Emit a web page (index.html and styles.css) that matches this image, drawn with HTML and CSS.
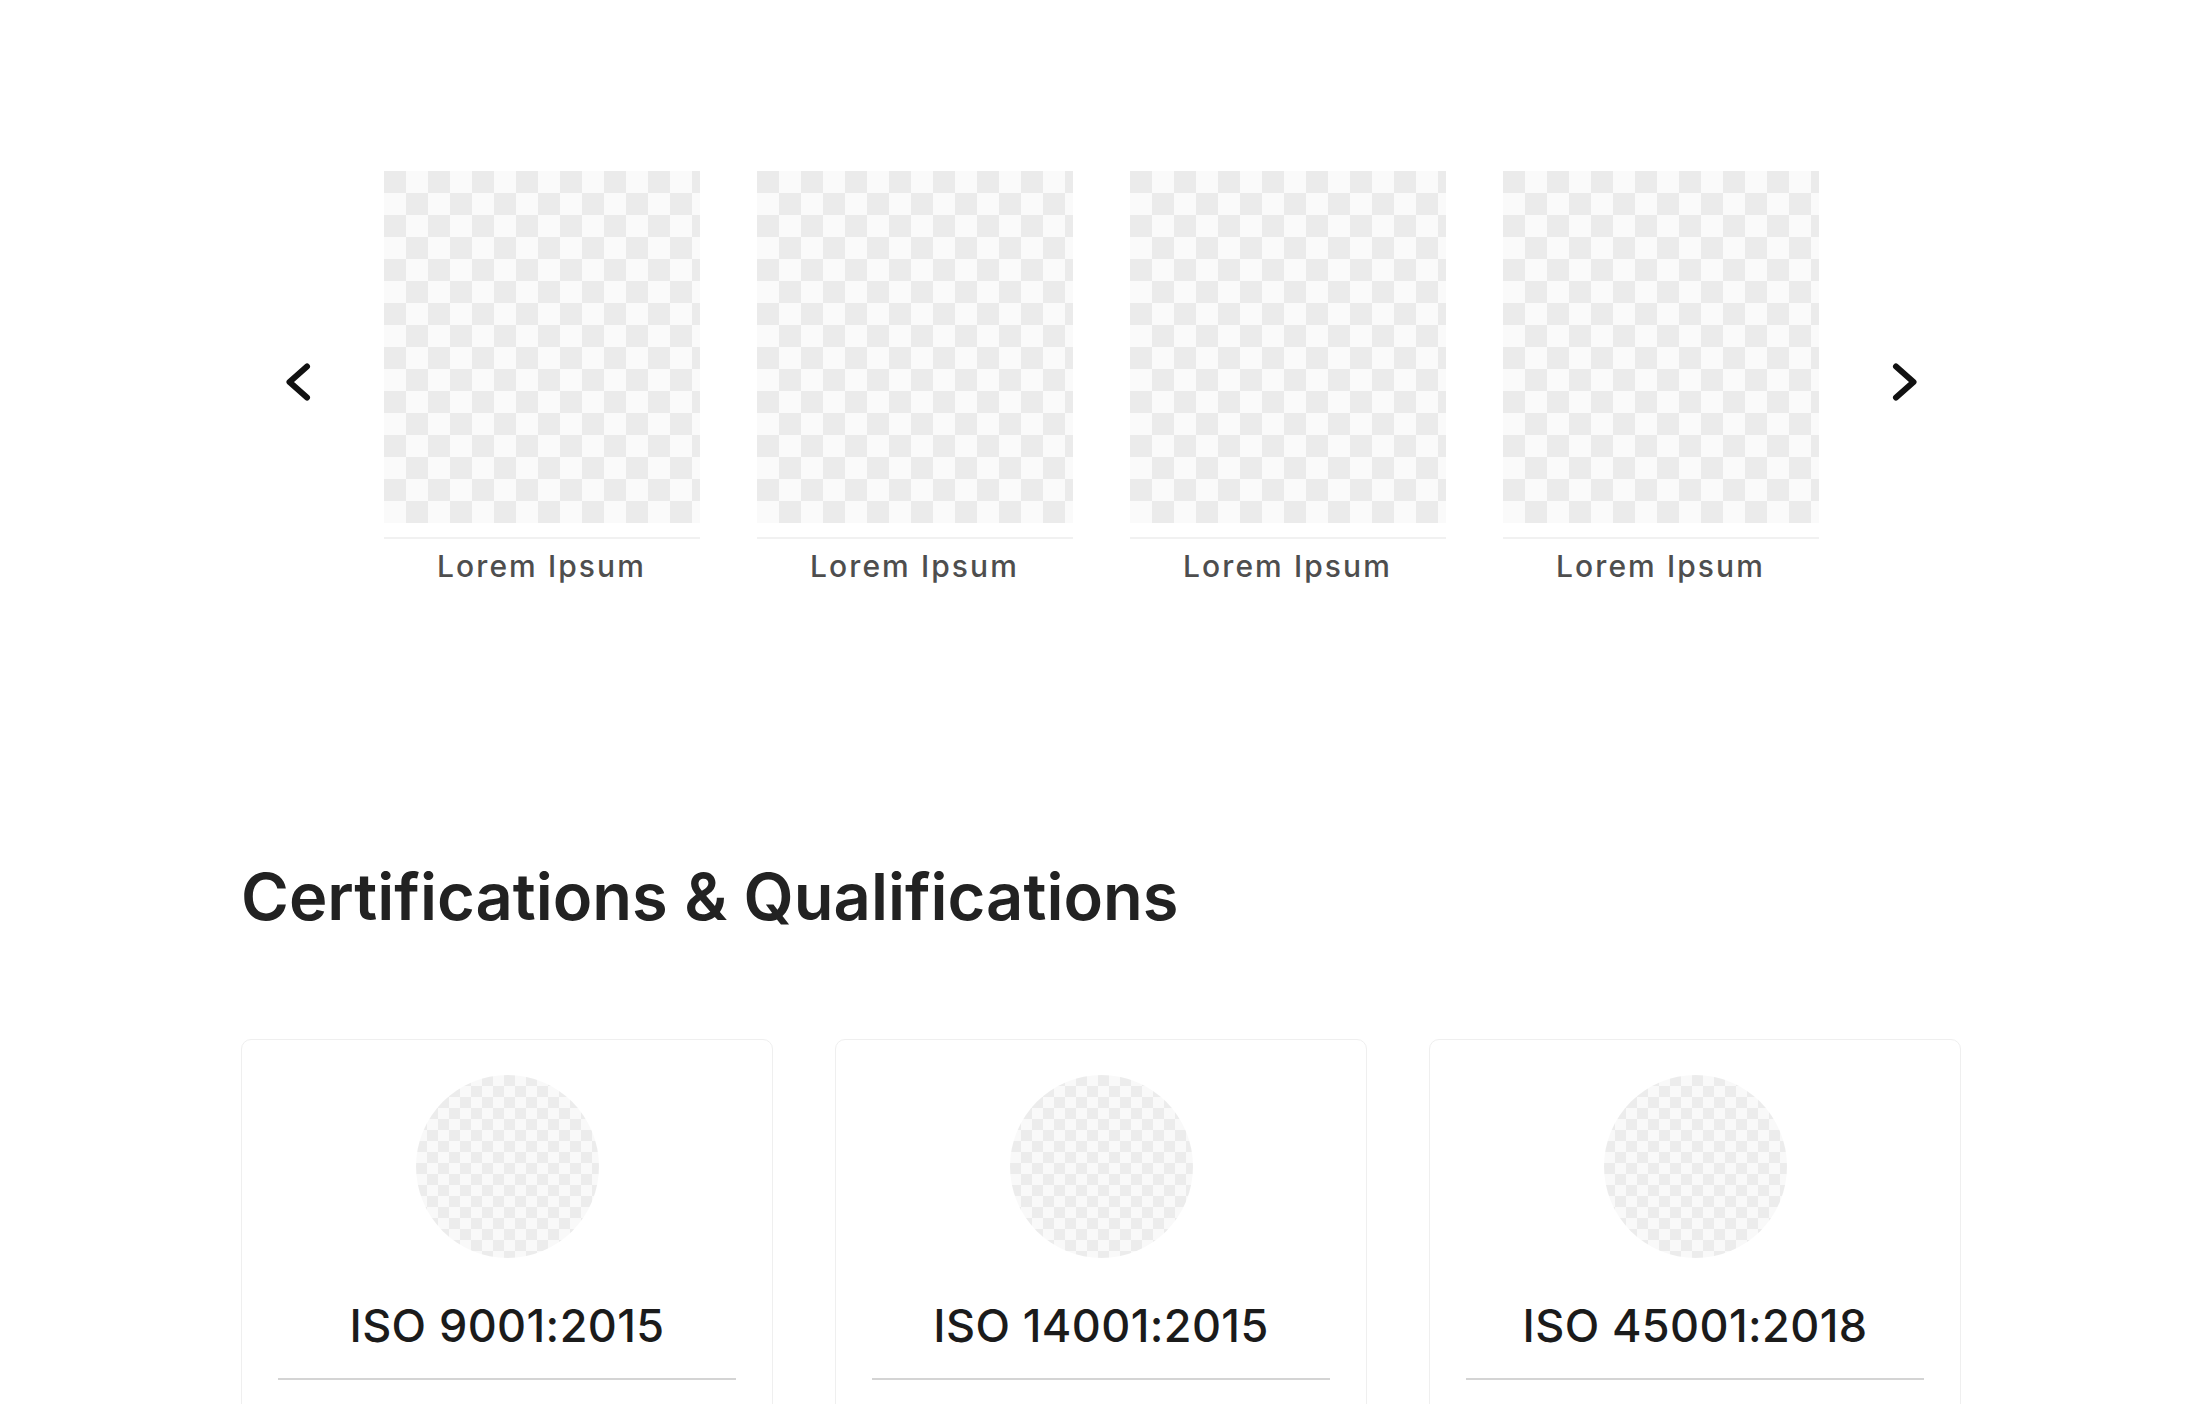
FILE: index.html
```html
<!DOCTYPE html>
<html lang="en">
<head>
<meta charset="utf-8">
<title>Certifications</title>
<link rel="stylesheet" href="styles.css">
</head>
<body>
<div class="page">
  <section class="carousel">
    <button class="arrow" aria-label="Previous">
      <svg width="28" height="40" viewBox="0 0 28 40"><polyline points="23,4.5 5.5,20 23,35.5" fill="none" stroke="#111" stroke-width="6" stroke-linecap="round" stroke-linejoin="round"/></svg>
    </button>
    <div class="track">
      <div class="item"><div class="thumb"></div><div class="item-line"></div><div class="item-label">Lorem Ipsum</div></div>
      <div class="item"><div class="thumb"></div><div class="item-line"></div><div class="item-label">Lorem Ipsum</div></div>
      <div class="item"><div class="thumb"></div><div class="item-line"></div><div class="item-label">Lorem Ipsum</div></div>
      <div class="item"><div class="thumb"></div><div class="item-line"></div><div class="item-label">Lorem Ipsum</div></div>
    </div>
    <button class="arrow" aria-label="Next">
      <svg width="28" height="40" viewBox="0 0 28 40"><polyline points="5,4.5 22.5,20 5,35.5" fill="none" stroke="#111" stroke-width="6" stroke-linecap="round" stroke-linejoin="round"/></svg>
    </button>
  </section>

  <section class="certs">
    <h2 class="certs-title">Certifications &amp; Qualifications</h2>
    <div class="cert-grid">
      <div class="cert-card"><div class="cert-logo"></div><div class="cert-name">ISO 9001:2015</div><div class="cert-line"></div></div>
      <div class="cert-card"><div class="cert-logo"></div><div class="cert-name">ISO 14001:2015</div><div class="cert-line"></div></div>
      <div class="cert-card"><div class="cert-logo"></div><div class="cert-name">ISO 45001:2018</div><div class="cert-line"></div></div>
    </div>
  </section>
</div>
</body>
</html>
```

FILE: styles.css
```css
* { box-sizing: border-box; }

body {
  margin: 0;
  background: #ffffff;
  font-family: Inter, "Open Sans", "Liberation Sans", sans-serif;
  color: #222;
}

.page {
  padding-right: 10px;
  padding-top: 171px;
}

.carousel {
  display: flex;
  justify-content: center;
  align-items: flex-start;
  gap: 72px;
}

.arrow {
  margin-top: 191px;
  width: 28px;
  height: 40px;
  padding: 0;
  border: 0;
  background: none;
  display: flex;
}

.track {
  display: flex;
  gap: 57px;
}

.item {
  width: 316px;
}

.thumb {
  height: 352px;
  background: repeating-conic-gradient(#fafafa 0 25%, #ebebeb 0 50%) 0 0 / 44px 44px;
}

.item-line {
  margin-top: 14px;
  height: 2px;
  background: #f1f1f1;
}

.item-label {
  margin-top: 9px;
  text-align: center;
  font-size: 30px;
  line-height: 36px;
  font-weight: 500;
  letter-spacing: 2.1px;
  color: #4e4e4e;
}

.certs {
  width: 1720px;
  margin: 273px auto 0;
}

.certs-title {
  margin: 0;
  font-size: 65px;
  line-height: 80px;
  font-weight: 600;
  letter-spacing: 0;
  color: #222;
}

.cert-grid {
  margin-top: 102px;
  display: grid;
  grid-template-columns: repeat(3, 1fr);
  gap: 62px;
}

.cert-card {
  border: 1.5px solid #efefef;
  border-radius: 10px;
  padding: 35px 36px 120px;
  display: flex;
  flex-direction: column;
  align-items: center;
}

.cert-logo {
  width: 183px;
  height: 183px;
  border-radius: 50%;
  background: repeating-conic-gradient(#f9f9f9 0 25%, #ececec 0 50%) 0 0 / 22px 22px;
}

.cert-name {
  margin-top: 40px;
  font-size: 45px;
  line-height: 56px;
  font-weight: 500;
  letter-spacing: 0.4px;
  color: #1b1b1b;
}

.cert-line {
  margin-top: 24px;
  width: 100%;
  height: 2px;
  background: #d4d4d4;
}
```
